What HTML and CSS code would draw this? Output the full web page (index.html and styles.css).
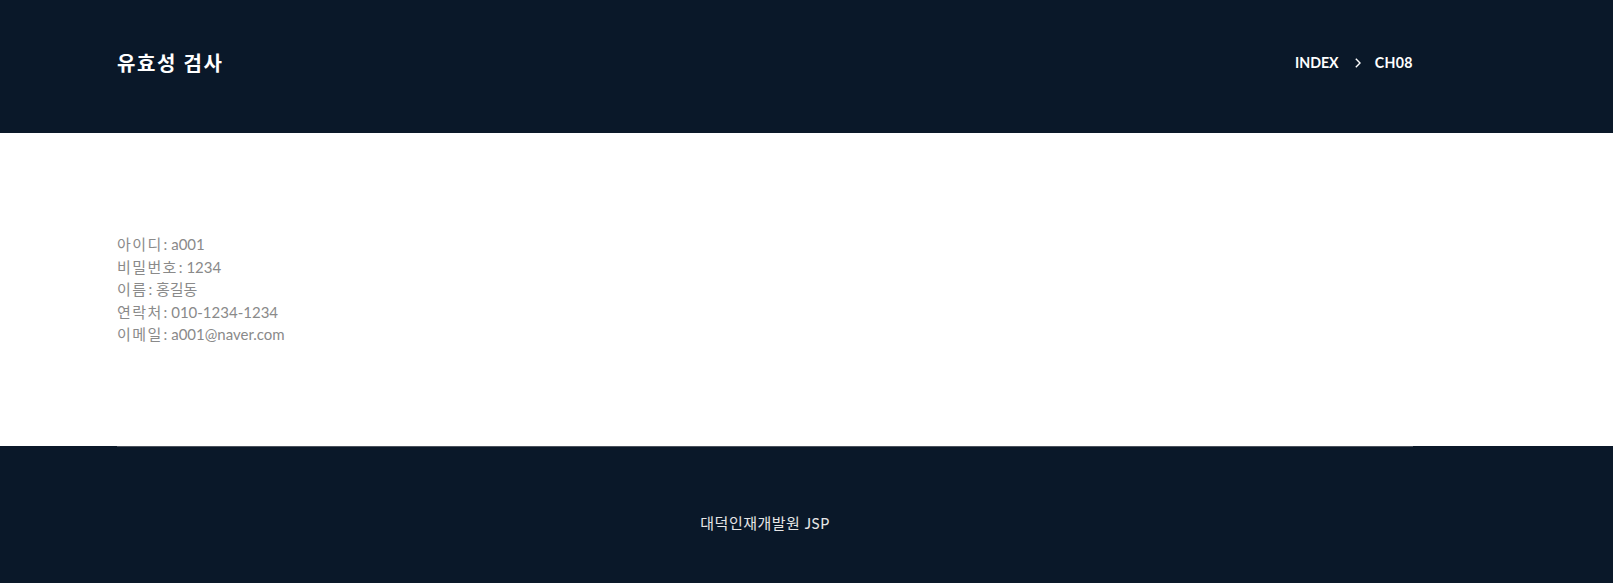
FILE: index.html
```html
<!DOCTYPE html>
<html lang="ko">
<head>
<meta charset="utf-8">
<title>유효성 검사</title>
<link rel="stylesheet" href="styles.css">
</head>
<body>
<header class="hero">
  <div class="container hero-inner">
    <h1 class="hero-title">유효성 검사</h1>
    <nav class="crumbs">
      <span>INDEX</span>
      <span class="crumb-sep">
        <svg width="8" height="12" viewBox="0 0 8 12"><path d="M1.8 1.8 L6 6 L1.8 10.2" fill="none" stroke="#fff" stroke-width="1.4"/></svg>
      </span>
      <span class="crumb-current">CH08</span>
    </nav>
  </div>
</header>
<main class="content">
  <div class="container">
    <p class="info">
      <span class="label">아이디</span>: a001<br>
      <span class="label">비밀번호</span>: 1234<br>
      <span class="label">이름</span>: 홍길동<br>
      <span class="label">연락처</span>: 010-1234-1234<br>
      <span class="label">이메일</span>: a001@naver.com
    </p>
  </div>
</main>
<footer class="footer">
  <div class="container footer-inner">
    <p class="footer-text">대덕인재개발원 JSP</p>
  </div>
</footer>
</body>
</html>
```

FILE: styles.css
```css
* { box-sizing: border-box; }
html, body { margin: 0; padding: 0; }
body {
  font-family: Lato, "Noto Sans CJK KR", sans-serif;
  background: #fff;
}
.container {
  width: 1296px;
  margin-left: 117px;
}
.hero {
  background: #0a1829;
  height: 133px;
}
.hero-inner {
  height: 100%;
  display: flex;
  align-items: center;
  justify-content: space-between;
  padding-bottom: 8px;
}
.hero-title {
  margin: 0;
  color: #fff;
  font-size: 20px;
  font-weight: 700;
  letter-spacing: 1.6px;
}
.crumbs {
  display: flex;
  align-items: center;
  gap: 13px;
  color: #fff;
  font-size: 14.2px;
  font-weight: 700;
}
.crumb-sep { display: flex; align-items: center; padding-left: 2px; }
.crumb-current { letter-spacing: 0.4px; }
.content {
  height: 313px;
  padding-top: 100px;
}
.info {
  margin: 0;
  color: #8a8a8a;
  font-size: 15px;
  line-height: 22.6px;
}
.label {
  letter-spacing: 1.4px;
  margin-right: 1px;
}
.footer {
  background: #0a1829;
  height: 137px;
}
.footer-inner {
  border-top: 1px solid #4a515c;
  height: 100%;
  display: flex;
  justify-content: center;
  padding-top: 65px;
}
.footer-text {
  margin: 0;
  color: #e6e6e6;
  font-size: 15px;
  letter-spacing: 0.5px;
}
```
